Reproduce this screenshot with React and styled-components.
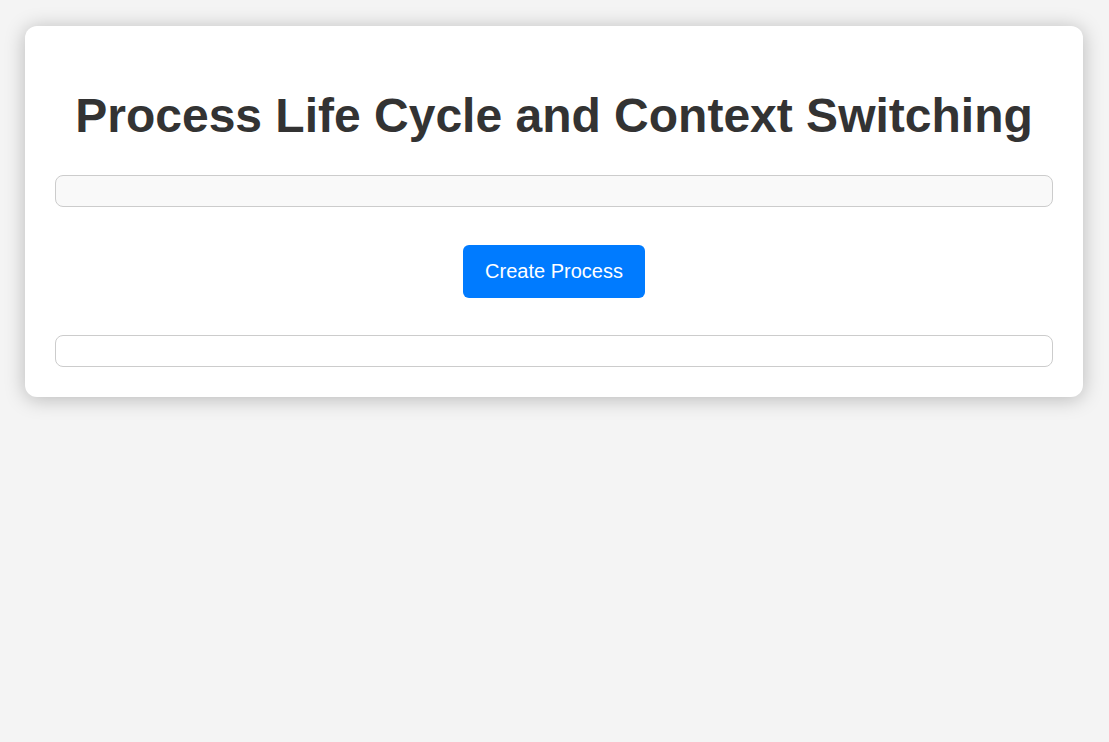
import React from 'react';
import styled, { createGlobalStyle } from 'styled-components';

const GlobalStyle = createGlobalStyle`
  body {
    margin: 0;
    background: #f4f4f4;
    font-family: "Liberation Sans", Arial, sans-serif;
  }
`;

const Page = styled.div`
  padding: 26px 26px 40px 25px;
`;

const Card = styled.div`
  background: #fff;
  border-radius: 12px;
  padding: 30px;
  box-shadow: 0 2px 20px rgba(0, 0, 0, 0.25);
`;

const Title = styled.h1`
  margin: 32px 0;
  font-size: 48px;
  font-weight: 700;
  color: #333;
  text-align: center;
`;

const Panel = styled.div`
  padding: 15px;
  border: 1px solid #ccc;
  border-radius: 8px;
  background: ${({ filled }) => (filled ? '#f9f9f9' : '#fff')};
`;

const Controls = styled.div`
  margin: 38px 0 37px;
  text-align: center;
`;

const Button = styled.button`
  padding: 15px 22px;
  border: none;
  border-radius: 6px;
  background: #007bff;
  color: #fff;
  font-family: inherit;
  font-size: 20px;
  cursor: pointer;
  &:hover {
    background: #0069d9;
  }
`;

const App = () => (
  <Page>
    <GlobalStyle />
    <Card>
      <Title>Process Life Cycle and Context Switching</Title>
      <Panel filled />
      <Controls>
        <Button>Create Process</Button>
      </Controls>
      <Panel />
    </Card>
  </Page>
);

export default App;
